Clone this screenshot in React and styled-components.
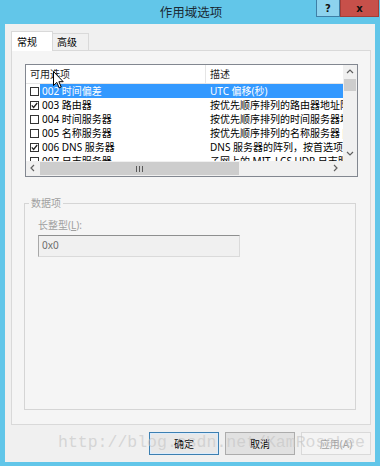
import React from "react";
import styled, { createGlobalStyle } from "styled-components";

const Global = createGlobalStyle`
  html, body { margin: 0; padding: 0; }
  body {
    background: #62c6e9;
    font-family: "Noto Sans", "Noto Sans CJK SC", sans-serif;
  }
`;

const UI_FONT = `"Noto Sans", "Noto Sans CJK SC", sans-serif`;

const Window = styled.div`
  position: relative;
  width: 380px;
  height: 466px;
  box-sizing: border-box;
  background: #62c6e9;
  padding: 0 5px 4px 5px;
  display: flex;
  flex-direction: column;
  overflow: hidden;
`;

const TitleBar = styled.div`
  height: 24px;
  margin: 0 -5px;
  display: grid;
  grid-template-columns: 1fr auto 1fr;
  align-items: start;
`;

const Title = styled.div`
  grid-column: 2;
  font-family: ${UI_FONT};
  font-size: 12.5px;
  line-height: 25px;
  color: #1b2b36;
  padding-left: 2px;
`;

const Controls = styled.div`
  grid-column: 3;
  justify-self: end;
  display: flex;
  margin-right: 1px;
`;

const CtlButton = styled.div`
  box-sizing: border-box;
  height: 17px;
  width: ${(p) => p.$w}px;
  background: ${(p) => p.$bg};
  border: 1px solid ${(p) => p.$border};
  border-top: none;
  display: flex;
  align-items: center;
  justify-content: center;
  font-family: "DejaVu Sans", sans-serif;
  font-weight: bold;
  font-size: 10px;
  color: #111;
`;

const Client = styled.div`
  flex: 1;
  background: #f0f0f0;
  padding: 7px 4px 0 6px;
  display: flex;
  flex-direction: column;
`;

const TabStrip = styled.div`
  display: flex;
  align-items: flex-end;
  height: 20px;
  position: relative;
  z-index: 1;
`;

const Tab = styled.div`
  box-sizing: border-box;
  height: ${(p) => (p.$active ? 20 : 17)}px;
  width: ${(p) => p.$w}px;
  margin-bottom: ${(p) => (p.$active ? 0 : 1)}px;
  background: ${(p) => (p.$active ? "#ffffff" : "#f0f0f0")};
  border: 1px solid #d9d9d9;
  border-bottom: none;
  ${(p) => (p.$active ? "" : "border-left: none;")}
  font-family: ${UI_FONT};
  font-size: 10px;
  color: #000;
  padding: ${(p) => (p.$active ? "4px 0 0 5px" : "2px 0 0 4px")};
  line-height: 12px;
`;

const Panel = styled.div`
  box-sizing: border-box;
  height: 375px;
  margin-top: -1px;
  border: 1px solid #d9d9d9;
  background: #f5f5f5;
  padding: 13px 12px 14px 13px;
  display: flex;
  flex-direction: column;
`;

const List = styled.div`
  box-sizing: border-box;
  height: 113px;
  border: 1px solid #828790;
  background: #ffffff;
  display: grid;
  grid-template-columns: 1fr 14px;
  grid-template-rows: 1fr 15px;
  overflow: hidden;
`;

const ListBody = styled.div`
  overflow: hidden;
  font-family: ${UI_FONT};
  font-size: 10px;
`;

const HeaderRow = styled.div`
  display: grid;
  grid-template-columns: 180px 1fr;
  height: 19px;
  box-sizing: border-box;
  border-bottom: 1px solid #e5e5e5;
`;

const HeaderCell = styled.div`
  line-height: 18px;
  padding-left: ${(p) => p.$pl}px;
  color: #1e1e1e;
  border-right: ${(p) => (p.$sep ? "1px solid #e5e5e5" : "none")};
  white-space: nowrap;
`;

const Row = styled.div`
  display: grid;
  grid-template-columns: 14px 166px 1fr;
  height: 14px;
  line-height: 14px;
  white-space: nowrap;
`;

const CheckCell = styled.div`
  display: flex;
  align-items: center;
  padding-left: 4px;
`;

const Box = styled.div`
  box-sizing: border-box;
  width: 9px;
  height: 9px;
  border: 1px solid #333;
  background: #fff;
  display: flex;
  align-items: center;
  justify-content: center;
`;

const Cell = styled.div`
  padding-left: ${(p) => p.$pl}px;
  background: ${(p) => (p.$sel ? "#3399ff" : "transparent")};
  color: ${(p) => (p.$sel ? "#ffffff" : "#000")};
  overflow: hidden;
`;

const VScroll = styled.div`
  background: #f0f0f0;
  display: flex;
  flex-direction: column;
`;

const HScroll = styled.div`
  background: #f0f0f0;
  display: flex;
`;

const Corner = styled.div`
  background: #f0f0f0;
`;

const Arrow = styled.div`
  flex: 0 0 14px;
  height: 14px;
  width: 14px;
  display: flex;
  align-items: center;
  justify-content: center;
`;

const VThumb = styled.div`
  height: 12px;
  margin: 0 1px;
  background: #cdcdcd;
`;

const Track = styled.div`
  flex: 1;
`;

const HThumb = styled.div`
  width: 199px;
  margin: 1px 0;
  background: #cdcdcd;
  display: flex;
  align-items: center;
  justify-content: center;
`;

const Group = styled.fieldset`
  flex: 1;
  margin: 19px 2px 0 -1px;
  padding: 0 0 0 13px;
  border: 1px solid #d5d5d5;
  min-width: 0;
`;

const Legend = styled.legend`
  margin-left: -9px;
  padding: 0 2px;
  font-family: ${UI_FONT};
  font-size: 10px;
  line-height: 14px;
  color: #a0a0a0;
`;

const FieldLabel = styled.div`
  margin-top: 8px;
  font-family: ${UI_FONT};
  font-size: 10px;
  line-height: 14px;
  color: #a0a0a0;
`;

const TextBox = styled.div`
  box-sizing: border-box;
  margin-top: 3px;
  width: 202px;
  height: 22px;
  border: 1px solid #dadada;
  border-top-color: #8e8f8f;
  border-left-color: #a8a8a8;
  background: #f0f0f0;
  font-family: ${UI_FONT};
  font-size: 10px;
  line-height: 19px;
  color: #6d6d6d;
  padding-left: 3px;
`;

const ButtonRow = styled.div`
  display: flex;
  justify-content: flex-end;
  gap: 6px;
  margin-top: 7px;
`;

const Button = styled.div`
  box-sizing: border-box;
  width: 70px;
  height: 23px;
  border: 1px solid
    ${(p) => (p.$variant === "default" ? "#3c7fb1" : p.$variant === "disabled" ? "#d9d9d9" : "#acacac")};
  background: ${(p) =>
    p.$variant === "disabled"
      ? "#f4f4f4"
      : p.$variant === "default"
      ? "#e8e8e8"
      : "#e1e1e1"};
  ${(p) => (p.$variant === "default" ? "box-shadow: inset 0 0 0 1px #dcecfc;" : "")}
  color: ${(p) => (p.$variant === "disabled" ? "#a0a0a0" : "#000")};
  font-family: ${UI_FONT};
  font-size: 10px;
  display: flex;
  align-items: center;
  justify-content: center;
`;

const Watermark = styled.div`
  position: absolute;
  left: 58px;
  top: 432px;
  font-family: "Liberation Mono", "Courier New", monospace;
  font-size: 16.5px;
  line-height: 22px;
  color: rgba(195, 195, 195, 0.6);
  white-space: nowrap;
  pointer-events: none;
`;

const Cursor = styled.svg`
  position: absolute;
  left: 53px;
  top: 71px;
`;

const Chevron = ({ dir }) => {
  const pts = {
    up: "2,6 5,3 8,6",
    down: "2,3 5,6 8,3",
    left: "6,2 3,5 6,8",
    right: "3,2 6,5 3,8",
  }[dir];
  return (
    <svg width="10" height="10" viewBox="0 0 10 10">
      <polyline points={pts} fill="none" stroke="#606060" strokeWidth="1.2" />
    </svg>
  );
};

const Check = () => (
  <svg width="7" height="7" viewBox="0 0 7 7">
    <polyline points="0.8,3.4 2.6,5.4 6.2,1" fill="none" stroke="#222" strokeWidth="1.3" />
  </svg>
);

const rows = [
  { checked: false, name: "002 时间偏差", desc: "UTC 偏移(秒)", sel: true },
  { checked: true, name: "003 路由器", desc: "按优先顺序排列的路由器地址阵列" },
  { checked: false, name: "004 时间服务器", desc: "按优先顺序排列的时间服务器地址阵列" },
  { checked: false, name: "005 名称服务器", desc: "按优先顺序排列的名称服务器 [IEN 116]" },
  { checked: true, name: "006 DNS 服务器", desc: "DNS 服务器的阵列，按首选项排列" },
  { checked: false, name: "007 日志服务器", desc: "子网上的 MIT_LCS UDP 日志服务器" },
];

export default function App() {
  return (
    <>
      <Global />
      <Window>
        <TitleBar>
          <Title>作用域选项</Title>
          <Controls>
            <CtlButton $w={24} $bg="#8dd3ee" $border="#3e7fa6">?</CtlButton>
            <CtlButton $w={39} $bg="#c7504a" $border="#a33d37">x</CtlButton>
          </Controls>
        </TitleBar>
        <Client>
          <TabStrip>
            <Tab $active $w={42}>常规</Tab>
            <Tab $w={36}>高级</Tab>
          </TabStrip>
          <Panel>
            <List>
              <ListBody>
                <HeaderRow>
                  <HeaderCell $pl={4} $sep>可用选项</HeaderCell>
                  <HeaderCell $pl={4}>描述</HeaderCell>
                </HeaderRow>
                {rows.map((r, i) => (
                  <Row key={i}>
                    <CheckCell>
                      <Box>{r.checked && <Check />}</Box>
                    </CheckCell>
                    <Cell $pl={2} $sel={r.sel}>{r.name}</Cell>
                    <Cell $pl={4} $sel={r.sel}>{r.desc}</Cell>
                  </Row>
                ))}
              </ListBody>
              <VScroll>
                <Arrow><Chevron dir="up" /></Arrow>
                <VThumb />
                <Track />
                <Arrow><Chevron dir="down" /></Arrow>
              </VScroll>
              <HScroll>
                <Arrow><Chevron dir="left" /></Arrow>
                <HThumb>
                  <svg width="7" height="6" viewBox="0 0 7 6">
                    <path d="M0.5 0v6M3.5 0v6M6.5 0v6" stroke="#5a5a5a" strokeWidth="1" />
                  </svg>
                </HThumb>
                <Track />
                <Arrow><Chevron dir="right" /></Arrow>
              </HScroll>
              <Corner />
            </List>
            <Group>
              <Legend>数据项</Legend>
              <FieldLabel>长整型(<u>L</u>):</FieldLabel>
              <TextBox>0x0</TextBox>
            </Group>
          </Panel>
          <ButtonRow>
            <Button $variant="default">确定</Button>
            <Button>取消</Button>
            <Button $variant="disabled">应用(A)</Button>
          </ButtonRow>
        </Client>
        <Watermark>http://blog.csdn.net/KamRoseLee</Watermark>
        <Cursor width="11" height="18" viewBox="0 0 11 18">
          <path d="M0.5 0.5 L0.5 14.5 L3.8 11.4 L6.2 16.8 L8.2 15.9 L5.9 10.7 L10.2 10.7 Z" fill="#fff" stroke="#000" strokeWidth="1" strokeLinejoin="round" />
        </Cursor>
      </Window>
    </>
  );
}
